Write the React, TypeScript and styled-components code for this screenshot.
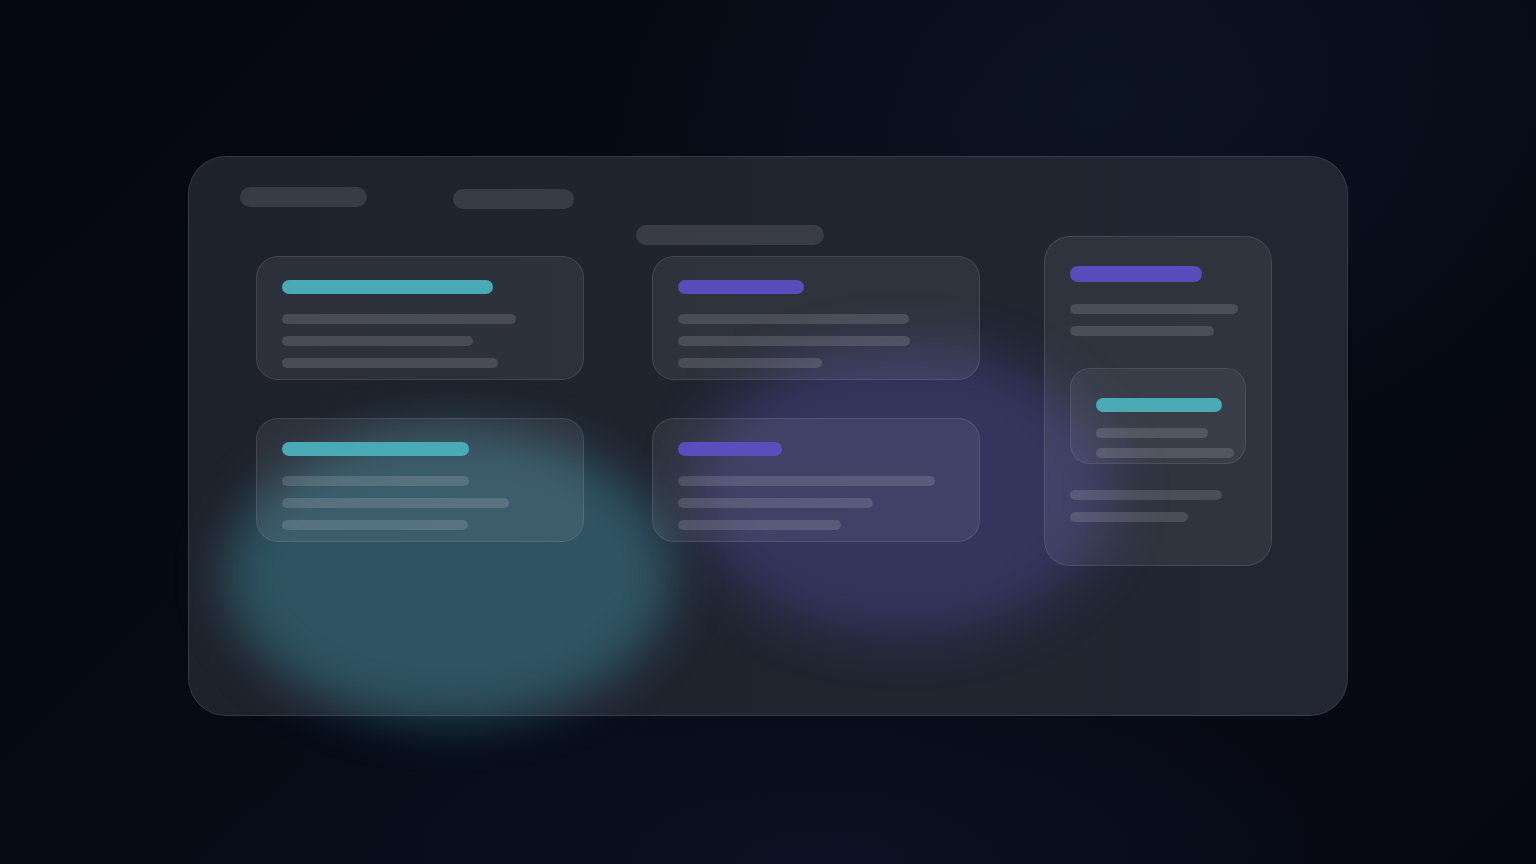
import React from "react";
import styled, { createGlobalStyle } from "styled-components";

const Global = createGlobalStyle`
  html, body {
    margin: 0;
    padding: 0;
    height: 100%;
  }
  body {
    font-family: Inter, "Liberation Sans", sans-serif;
    background: #050913;
  }
  #root {
    min-height: 100vh;
  }
`;

const Page = styled.div`
  width: 100%;
  height: 864px;
  overflow: hidden;
  background:
    radial-gradient(ellipse 700px 500px at 72% 12%, rgba(20, 30, 52, 0.38) 0%, rgba(20, 30, 52, 0) 70%),
    radial-gradient(ellipse 800px 300px at 55% 100%, rgba(18, 26, 52, 0.45) 0%, rgba(18, 26, 52, 0) 70%),
    linear-gradient(135deg, #04070f 0%, #070c18 50%, #050812 100%);
  display: flex;
  justify-content: center;
  padding-top: 156px;
  box-sizing: border-box;
`;

const Panel = styled.div`
  position: relative;
  width: 1160px;
  height: 560px;
  box-sizing: border-box;
  border-radius: 38px;
  border: 1px solid rgba(255, 255, 255, 0.1);
  background: linear-gradient(90deg, #1e222c 0%, #202530 60%, #212632 100%);
  padding: 30px 0 0 51px;
`;

const Glow = styled.div<{ $color: string; $blur: number }>`
  position: absolute;
  border-radius: 50%;
  background: ${(p) => p.$color};
  filter: blur(${(p) => p.$blur}px);
  pointer-events: none;
  z-index: 0;
`;

const Content = styled.div`
  position: relative;
  z-index: 1;
`;

const Header = styled.div`
  display: flex;
  align-items: flex-start;
  height: 22px;
`;

const Pill = styled.div<{ $w: number; $offset?: number; $top?: number }>`
  width: ${(p) => p.$w}px;
  height: 20px;
  border-radius: 10px;
  background: rgba(255, 255, 255, 0.115);
  margin-left: ${(p) => p.$offset ?? 0}px;
  margin-top: ${(p) => p.$top ?? 0}px;
  flex-shrink: 0;
`;

const Columns = styled.div`
  display: flex;
  align-items: flex-start;
  margin-top: 16px;
  margin-left: 16px;
`;

const Column = styled.div<{ $w: number; $offset?: number; $pad?: number }>`
  display: flex;
  flex-direction: column;
  width: ${(p) => p.$w}px;
  margin-left: ${(p) => p.$offset ?? 0}px;
  padding-top: ${(p) => p.$pad ?? 0}px;
  gap: 38px;
`;

const ColumnStack = styled.div`
  display: flex;
  flex-direction: column;
  gap: 11px;
`;

const Card = styled.div`
  box-sizing: border-box;
  height: 124px;
  border-radius: 22px;
  border: 1px solid rgba(255, 255, 255, 0.1);
  background: rgba(255, 255, 255, 0.065);
  padding: 23px 25px 0;
  display: flex;
  flex-direction: column;
`;

const TallCard = styled.div`
  box-sizing: border-box;
  height: 330px;
  border-radius: 26px;
  border: 1px solid rgba(255, 255, 255, 0.1);
  background: rgba(255, 255, 255, 0.065);
  padding: 29px 25px 0;
  display: flex;
  flex-direction: column;
`;

const InnerCard = styled.div`
  box-sizing: border-box;
  height: 96px;
  border-radius: 20px;
  border: 1px solid rgba(255, 255, 255, 0.09);
  background: rgba(255, 255, 255, 0.05);
  padding: 29px 12px 0 25px;
  margin-top: 32px;
  display: flex;
  flex-direction: column;
`;

const Title = styled.div<{ $w: number; $tone: "teal" | "purple"; $h?: number }>`
  width: ${(p) => p.$w}px;
  height: ${(p) => p.$h ?? 14}px;
  border-radius: 8px;
  background: ${(p) => (p.$tone === "teal" ? "#4bb0bc" : "#5a50c2")};
  opacity: 0.95;
  flex-shrink: 0;
`;

const Lines = styled.div<{ $top: number; $gap: number }>`
  display: flex;
  flex-direction: column;
  gap: ${(p) => p.$gap}px;
  margin-top: ${(p) => p.$top}px;
`;

const Line = styled.div<{ $w: number }>`
  width: ${(p) => p.$w}px;
  height: 10px;
  border-radius: 5px;
  background: rgba(255, 255, 255, 0.135);
`;

type CardData = { title: number; tone: "teal" | "purple"; lines: number[] };

const col1: CardData[] = [
  { title: 211, tone: "teal", lines: [234, 191, 216] },
  { title: 187, tone: "teal", lines: [187, 227, 186] },
];

const col2: CardData[] = [
  { title: 126, tone: "purple", lines: [231, 232, 144] },
  { title: 104, tone: "purple", lines: [257, 195, 163] },
];

const SmallCard: React.FC<{ data: CardData }> = ({ data }) => (
  <Card>
    <Title $w={data.title} $tone={data.tone} />
    <Lines $top={20} $gap={12}>
      {data.lines.map((w, i) => (
        <Line key={i} $w={w} />
      ))}
    </Lines>
  </Card>
);

export default function App() {
  return (
    <>
      <Global />
      <Page>
        <Panel>
          <Glow
            $color="rgba(70, 150, 172, 0.42)"
            $blur={24}
            style={{ left: 36, top: 272, width: 448, height: 292 }}
          />
          <Glow
            $color="rgba(98, 88, 200, 0.3)"
            $blur={26}
            style={{ left: 502, top: 190, width: 424, height: 288 }}
          />
          <Content>
            <Header>
              <Pill $w={127} />
              <Pill $w={121} $offset={86} $top={2} />
            </Header>
            <Columns>
              <Column $w={328} $pad={31}>
                {col1.map((c, i) => (
                  <SmallCard key={i} data={c} />
                ))}
              </Column>
              <Column $w={328} $offset={68}>
                <ColumnStack>
                  <Pill $w={188} $offset={-16} />
                  <SmallCard data={col2[0]} />
                </ColumnStack>
                <SmallCard data={col2[1]} />
              </Column>
              <Column $w={228} $offset={64} $pad={11}>
                <TallCard>
                  <Title $w={132} $tone="purple" $h={16} />
                  <Lines $top={22} $gap={12}>
                    <Line $w={168} />
                    <Line $w={144} />
                  </Lines>
                  <InnerCard>
                    <Title $w={126} $tone="teal" />
                    <Lines $top={16} $gap={10}>
                      <Line $w={112} />
                      <Line $w={138} />
                    </Lines>
                  </InnerCard>
                  <Lines $top={26} $gap={12}>
                    <Line $w={152} />
                    <Line $w={118} />
                  </Lines>
                </TallCard>
              </Column>
            </Columns>
          </Content>
        </Panel>
      </Page>
    </>
  );
}
